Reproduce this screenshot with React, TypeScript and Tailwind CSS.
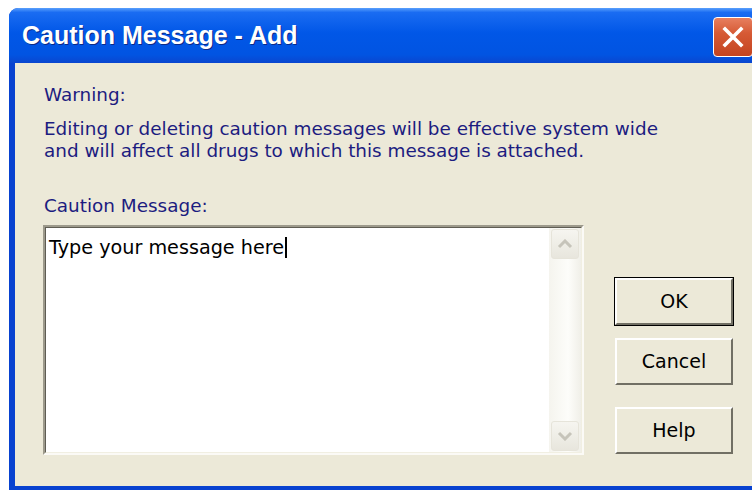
import React from 'react';

const sysFont = "font-['DejaVu_Sans',Verdana,sans-serif]";
const titleFont = "font-['Liberation_Sans',Arial,sans-serif]";

function DialogButton({ label, isDefault = false }: { label: string; isDefault?: boolean }) {
  return (
    <div className={isDefault ? 'border border-black' : 'border border-transparent'}>
      <button
        className={`${sysFont} flex h-[47px] w-[118px] items-center justify-center border-2 border-t-white border-l-white border-r-[#716f64] border-b-[#716f64] bg-[#ece9d8] text-[19px] text-black`}
      >
        {label}
      </button>
    </div>
  );
}

function ScrollArrow({ up }: { up: boolean }) {
  return (
    <div className="flex h-[30px] w-[28px] items-center justify-center rounded-[3px] border border-[#e6e4da] bg-[linear-gradient(to_bottom,#f6f5f0,#e8e6dd)]">
      <svg width="16" height="10" viewBox="0 0 16 10">
        <polyline
          points={up ? '2,8 8,2 14,8' : '2,2 8,8 14,2'}
          fill="none"
          stroke="#c6c4ba"
          strokeWidth="3"
        />
      </svg>
    </div>
  );
}

export default function App() {
  return (
    <div className="h-[490px] w-[752px] overflow-hidden bg-white pl-[9px] pt-[8px]">
      <div className="flex h-[482px] w-[800px] flex-col overflow-hidden rounded-t-[9px] bg-[#0842d0]">
        {/* title bar */}
        <div className="flex h-[55px] items-center justify-between bg-[linear-gradient(to_bottom,#5aa0fc_0%,#1a6cf2_8%,#0157e7_45%,#0154e2_85%,#0a46cf_100%)] pl-[13px] pr-[56px]">
          <span
            className={`${titleFont} text-[25px] font-bold text-white [text-shadow:1px_1px_0_#0c2a88]`}
          >
            Caution Message - Add
          </span>
          <div className="mt-[3px] flex h-[40px] w-[40px] items-center justify-center rounded-[4px] border-[1.5px] border-white bg-[linear-gradient(to_bottom,#e77f5f,#d65a35_40%,#c44420)]">
            <svg width="24" height="24" viewBox="0 0 24 24">
              <path d="M4 4 L20 20 M20 4 L4 20" stroke="white" strokeWidth="3.6" strokeLinecap="square" />
            </svg>
          </div>
        </div>

        {/* client area */}
        <div className="flex flex-1 border-b-[4px] border-l-[6px] border-[#0842d0] bg-[#ece9d8]">
          <div className="flex w-[569px] shrink-0 flex-col pl-[28px] pt-[21px]">
            <div className={`${sysFont} whitespace-nowrap text-[18.4px] leading-[22px] text-[#1c1c80]`}>
              <p className="pl-[1px]">Warning:</p>
              <p className="mt-[12px] pl-[1px]">Editing or deleting caution messages will be effective system wide</p>
              <p className="pl-[1px]">and will affect all drugs to which this message is attached.</p>
              <p className="mt-[33px] pl-[1px]">Caution Message:</p>
            </div>

            <div className="mt-[8px] flex h-[230px] w-[541px] border-2 border-t-[#9d9a8c] border-l-[#9d9a8c] border-r-[#fbfaf6] border-b-[#fbfaf6]">
              <div className="flex flex-1 border border-t-[#5f5d53] border-l-[#5f5d53] border-r-[#f1efe2] border-b-[#f1efe2] bg-white">
                <div className={`${sysFont} flex-1 whitespace-nowrap pl-[3px] pt-[5px] text-[19.2px] leading-[23px] text-black`}>
                  Type your message here
                  <span className="ml-[1px] inline-block h-[21px] w-[2px] translate-y-[4px] bg-black" />
                </div>
                <div className="flex w-[32px] flex-col items-center justify-between bg-[linear-gradient(to_right,#f5f4ee,#fdfdfa_60%,#f0efe8)] py-[1px]">
                  <ScrollArrow up />
                  <ScrollArrow up={false} />
                </div>
              </div>
            </div>
          </div>

          <div className="ml-[30px] flex flex-col pt-[214px]">
            <DialogButton label="OK" isDefault />
            <div className="mt-[11px]">
              <DialogButton label="Cancel" />
            </div>
            <div className="mt-[20px]">
              <DialogButton label="Help" />
            </div>
          </div>
        </div>
      </div>
    </div>
  );
}
